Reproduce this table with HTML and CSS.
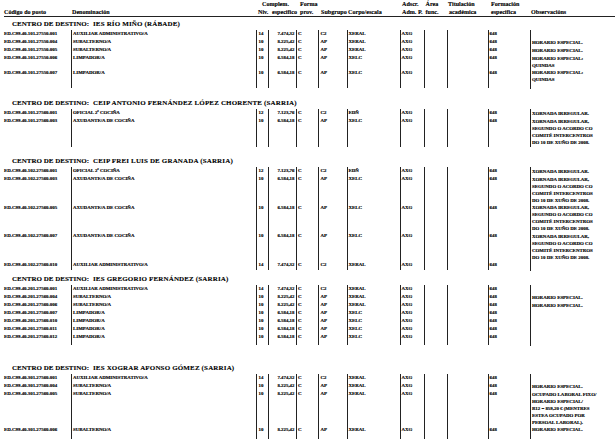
FILE: index.html
```html
<!DOCTYPE html>
<html lang="gl">
<head>
<meta charset="utf-8">
<title>RPT</title>
<link rel="stylesheet" href="styles.css">
</head>
<body>
<div class="page">
  <div class="head">
    <div class="hc"><div>&nbsp;</div><div>Código do posto</div></div>
    <div class="hc h-den"><div>&nbsp;</div><div>Denominación</div></div>
    <div class="hc h-niv"><div>&nbsp;</div><div>Niv.</div></div>
    <div class="hc h-comp"><div class="h-comp-top">Complem.</div><div>específico</div></div>
    <div class="hc h-forma"><div>Forma</div><div>prov.</div></div>
    <div class="hc h-sub"><div>&nbsp;</div><div>Subgrupo</div></div>
    <div class="hc h-corpo"><div>&nbsp;</div><div>Corpo/escala</div></div>
    <div class="hc h-ads"><div>Adscr.</div><div>Adm. P.</div></div>
    <div class="hc h-area"><div>Área</div><div>func.</div></div>
    <div class="hc h-tit"><div class="h-tit-top">Titulación</div><div>académica</div></div>
    <div class="hc h-form"><div>Formación</div><div>específica</div></div>
    <div class="hc h-obs"><div>&nbsp;</div><div>Observacións</div></div>
  </div>

  <section class="sec sec-1">
    <h2 class="title"><span class="lbl">CENTRO DE DESTINO:</span><span class="name">IES RÍO MIÑO (RÁBADE)</span></h2>
    <div class="grid">
      <div class="row"><span class="c code">ED.C99.40.101.27550.001</span><span class="c den">AUXILIAR ADMINISTRATIVO/A</span><span class="c niv">14</span><span class="c comp">7.474,32</span><span class="c forma">C</span><span class="c sub">C2</span><span class="c corpo">XERAL</span><span class="c ads">AXG</span><span class="c area"></span><span class="c tit"></span><span class="c form">648</span><span class="c obs"></span></div>
      <div class="row"><span class="c code">ED.C99.40.101.27550.004</span><span class="c den">SUBALTERNO/A</span><span class="c niv">10</span><span class="c comp">8.225,42</span><span class="c forma">C</span><span class="c sub">AP</span><span class="c corpo">XERAL</span><span class="c ads">AXG</span><span class="c area"></span><span class="c tit"></span><span class="c form">648</span><span class="c obs">HORARIO ESPECIAL.</span></div>
      <div class="row"><span class="c code">ED.C99.40.101.27550.005</span><span class="c den">SUBALTERNO/A</span><span class="c niv">10</span><span class="c comp">8.225,42</span><span class="c forma">C</span><span class="c sub">AP</span><span class="c corpo">XERAL</span><span class="c ads">AXG</span><span class="c area"></span><span class="c tit"></span><span class="c form">648</span><span class="c obs">HORARIO ESPECIAL.</span></div>
      <div class="row"><span class="c code">ED.C99.40.101.27550.006</span><span class="c den">LIMPADOR/A</span><span class="c niv">10</span><span class="c comp">6.584,18</span><span class="c forma">C</span><span class="c sub">AP</span><span class="c corpo">XELC</span><span class="c ads">AXG</span><span class="c area"></span><span class="c tit"></span><span class="c form">648</span><span class="c obs">HORARIO ESPECIAL:<br>QUINDAS</span></div>
      <div class="row"><span class="c code">ED.C99.40.101.27550.007</span><span class="c den">LIMPADOR/A</span><span class="c niv">10</span><span class="c comp">6.584,18</span><span class="c forma">C</span><span class="c sub">AP</span><span class="c corpo">XELC</span><span class="c ads">AXG</span><span class="c area"></span><span class="c tit"></span><span class="c form">648</span><span class="c obs">HORARIO ESPECIAL:<br>QUINDAS</span></div>
      <div class="row spacer sp-1"><span class="c code"></span><span class="c den"></span><span class="c niv"></span><span class="c comp"></span><span class="c forma"></span><span class="c sub"></span><span class="c corpo"></span><span class="c ads"></span><span class="c area"></span><span class="c tit"></span><span class="c form"></span><span class="c obs"></span></div>
    </div>
  </section>

  <section class="sec sec-2">
    <h2 class="title"><span class="lbl">CENTRO DE DESTINO:</span><span class="name">CEIP ANTONIO FERNÁNDEZ LÓPEZ CHORENTE (SARRIA)</span></h2>
    <div class="grid">
      <div class="row"><span class="c code">ED.C99.40.101.27560.001</span><span class="c den">OFICIAL 2ª COCIÑA</span><span class="c niv">12</span><span class="c comp">7.123,76</span><span class="c forma">C</span><span class="c sub">C2</span><span class="c corpo">EDÑ</span><span class="c ads">AXG</span><span class="c area"></span><span class="c tit"></span><span class="c form">648</span><span class="c obs">XORNADA IRREGULAR.</span></div>
      <div class="row"><span class="c code">ED.C99.40.101.27560.003</span><span class="c den">AXUDANTE/A DE COCIÑA</span><span class="c niv">10</span><span class="c comp">6.584,18</span><span class="c forma">C</span><span class="c sub">AP</span><span class="c corpo">XELC</span><span class="c ads">AXG</span><span class="c area"></span><span class="c tit"></span><span class="c form">648</span><span class="c obs">XORNADA IRREGULAR,<br>SEGUNDO O ACORDO CO<br>COMITÉ INTERCENTROS<br>DO 10 DE XUÑO DE 2008.</span></div>
      <div class="row spacer sp-2"><span class="c code"></span><span class="c den"></span><span class="c niv"></span><span class="c comp"></span><span class="c forma"></span><span class="c sub"></span><span class="c corpo"></span><span class="c ads"></span><span class="c area"></span><span class="c tit"></span><span class="c form"></span><span class="c obs"></span></div>
    </div>
  </section>

  <section class="sec sec-3">
    <h2 class="title"><span class="lbl">CENTRO DE DESTINO:</span><span class="name">CEIP FREI LUIS DE GRANADA (SARRIA)</span></h2>
    <div class="grid">
      <div class="row"><span class="c code">ED.C99.40.102.27560.001</span><span class="c den">OFICIAL 2ª COCIÑA</span><span class="c niv">12</span><span class="c comp">7.123,76</span><span class="c forma">C</span><span class="c sub">C2</span><span class="c corpo">EDÑ</span><span class="c ads">AXG</span><span class="c area"></span><span class="c tit"></span><span class="c form">648</span><span class="c obs">XORNADA IRREGULAR.</span></div>
      <div class="row"><span class="c code">ED.C99.40.102.27560.003</span><span class="c den">AXUDANTE/A DE COCIÑA</span><span class="c niv">10</span><span class="c comp">6.584,18</span><span class="c forma">C</span><span class="c sub">AP</span><span class="c corpo">XELC</span><span class="c ads">AXG</span><span class="c area"></span><span class="c tit"></span><span class="c form">648</span><span class="c obs">XORNADA IRREGULAR,<br>SEGUNDO O ACORDO CO<br>COMITÉ INTERCENTROS<br>DO 10 DE XUÑO DE 2008.</span></div>
      <div class="row"><span class="c code">ED.C99.40.102.27560.005</span><span class="c den">AXUDANTE/A DE COCIÑA</span><span class="c niv">10</span><span class="c comp">6.584,18</span><span class="c forma">C</span><span class="c sub">AP</span><span class="c corpo">XELC</span><span class="c ads">AXG</span><span class="c area"></span><span class="c tit"></span><span class="c form">648</span><span class="c obs">XORNADA IRREGULAR,<br>SEGUNDO O ACORDO CO<br>COMITÉ INTERCENTROS<br>DO 10 DE XUÑO DE 2008.</span></div>
      <div class="row"><span class="c code">ED.C99.40.102.27560.007</span><span class="c den">AXUDANTE/A DE COCIÑA</span><span class="c niv">10</span><span class="c comp">6.584,18</span><span class="c forma">C</span><span class="c sub">AP</span><span class="c corpo">XELC</span><span class="c ads">AXG</span><span class="c area"></span><span class="c tit"></span><span class="c form">648</span><span class="c obs">XORNADA IRREGULAR,<br>SEGUNDO O ACORDO CO<br>COMITÉ INTERCENTROS<br>DO 10 DE XUÑO DE 2008.</span></div>
      <div class="row"><span class="c code">ED.C99.40.102.27560.010</span><span class="c den">AUXILIAR ADMINISTRATIVO/A</span><span class="c niv">14</span><span class="c comp">7.474,32</span><span class="c forma">C</span><span class="c sub">C2</span><span class="c corpo">XERAL</span><span class="c ads">AXG</span><span class="c area"></span><span class="c tit"></span><span class="c form">648</span><span class="c obs"></span></div>
      <div class="row spacer sp-3"><span class="c code"></span><span class="c den"></span><span class="c niv"></span><span class="c comp"></span><span class="c forma"></span><span class="c sub"></span><span class="c corpo"></span><span class="c ads"></span><span class="c area"></span><span class="c tit"></span><span class="c form"></span><span class="c obs"></span></div>
    </div>
  </section>

  <section class="sec sec-4">
    <h2 class="title"><span class="lbl">CENTRO DE DESTINO:</span><span class="name">IES GREGORIO FERNÁNDEZ (SARRIA)</span></h2>
    <div class="grid">
      <div class="row"><span class="c code">ED.C99.40.201.27560.001</span><span class="c den">AUXILIAR ADMINISTRATIVO/A</span><span class="c niv">14</span><span class="c comp">7.474,32</span><span class="c forma">C</span><span class="c sub">C2</span><span class="c corpo">XERAL</span><span class="c ads">AXG</span><span class="c area"></span><span class="c tit"></span><span class="c form">648</span><span class="c obs"></span></div>
      <div class="row"><span class="c code">ED.C99.40.201.27560.004</span><span class="c den">SUBALTERNO/A</span><span class="c niv">10</span><span class="c comp">8.225,42</span><span class="c forma">C</span><span class="c sub">AP</span><span class="c corpo">XERAL</span><span class="c ads">AXG</span><span class="c area"></span><span class="c tit"></span><span class="c form">648</span><span class="c obs">HORARIO ESPECIAL.</span></div>
      <div class="row"><span class="c code">ED.C99.40.201.27560.006</span><span class="c den">SUBALTERNO/A</span><span class="c niv">10</span><span class="c comp">8.225,42</span><span class="c forma">C</span><span class="c sub">AP</span><span class="c corpo">XERAL</span><span class="c ads">AXG</span><span class="c area"></span><span class="c tit"></span><span class="c form">648</span><span class="c obs">HORARIO ESPECIAL.</span></div>
      <div class="row"><span class="c code">ED.C99.40.201.27560.007</span><span class="c den">LIMPADOR/A</span><span class="c niv">10</span><span class="c comp">6.584,18</span><span class="c forma">C</span><span class="c sub">AP</span><span class="c corpo">XELC</span><span class="c ads">AXG</span><span class="c area"></span><span class="c tit"></span><span class="c form">648</span><span class="c obs"></span></div>
      <div class="row"><span class="c code">ED.C99.40.201.27560.010</span><span class="c den">LIMPADOR/A</span><span class="c niv">10</span><span class="c comp">6.584,18</span><span class="c forma">C</span><span class="c sub">AP</span><span class="c corpo">XELC</span><span class="c ads">AXG</span><span class="c area"></span><span class="c tit"></span><span class="c form">648</span><span class="c obs"></span></div>
      <div class="row"><span class="c code">ED.C99.40.201.27560.011</span><span class="c den">LIMPADOR/A</span><span class="c niv">10</span><span class="c comp">6.584,18</span><span class="c forma">C</span><span class="c sub">AP</span><span class="c corpo">XELC</span><span class="c ads">AXG</span><span class="c area"></span><span class="c tit"></span><span class="c form">648</span><span class="c obs"></span></div>
      <div class="row"><span class="c code">ED.C99.40.201.27560.012</span><span class="c den">LIMPADOR/A</span><span class="c niv">10</span><span class="c comp">6.584,18</span><span class="c forma">C</span><span class="c sub">AP</span><span class="c corpo">XELC</span><span class="c ads">AXG</span><span class="c area"></span><span class="c tit"></span><span class="c form">648</span><span class="c obs"></span></div>
      <div class="row spacer sp-4"><span class="c code"></span><span class="c den"></span><span class="c niv"></span><span class="c comp"></span><span class="c forma"></span><span class="c sub"></span><span class="c corpo"></span><span class="c ads"></span><span class="c area"></span><span class="c tit"></span><span class="c form"></span><span class="c obs"></span></div>
    </div>
  </section>

  <section class="sec sec-5">
    <h2 class="title"><span class="lbl">CENTRO DE DESTINO:</span><span class="name">IES XOGRAR AFONSO GÓMEZ (SARRIA)</span></h2>
    <div class="grid">
      <div class="row"><span class="c code">ED.C99.40.301.27560.001</span><span class="c den">AUXILIAR ADMINISTRATIVO/A</span><span class="c niv">14</span><span class="c comp">7.474,32</span><span class="c forma">C</span><span class="c sub">C2</span><span class="c corpo">XERAL</span><span class="c ads">AXG</span><span class="c area"></span><span class="c tit"></span><span class="c form">648</span><span class="c obs"></span></div>
      <div class="row"><span class="c code">ED.C99.40.301.27560.004</span><span class="c den">SUBALTERNO/A</span><span class="c niv">10</span><span class="c comp">8.225,42</span><span class="c forma">C</span><span class="c sub">AP</span><span class="c corpo">XERAL</span><span class="c ads">AXG</span><span class="c area"></span><span class="c tit"></span><span class="c form">648</span><span class="c obs">HORARIO ESPECIAL.</span></div>
      <div class="row"><span class="c code">ED.C99.40.301.27560.005</span><span class="c den">SUBALTERNO/A</span><span class="c niv">10</span><span class="c comp">8.225,42</span><span class="c forma">C</span><span class="c sub">AP</span><span class="c corpo">XERAL</span><span class="c ads">AXG</span><span class="c area"></span><span class="c tit"></span><span class="c form">648</span><span class="c obs">OCUPADO LABORAL FIXO/<br>HORARIO ESPECIAL/<br>B12 = 859,20 € (MENTRES<br>ESTEA OCUPADO POR<br>PERSOAL LABORAL).</span></div>
      <div class="row"><span class="c code">ED.C99.40.301.27560.006</span><span class="c den">SUBALTERNO/A</span><span class="c niv">10</span><span class="c comp">8.225,42</span><span class="c forma">C</span><span class="c sub">AP</span><span class="c corpo">XERAL</span><span class="c ads">AXG</span><span class="c area"></span><span class="c tit"></span><span class="c form">648</span><span class="c obs">HORARIO ESPECIAL.</span></div>
      <div class="row spacer sp-5"><span class="c code"></span><span class="c den"></span><span class="c niv"></span><span class="c comp"></span><span class="c forma"></span><span class="c sub"></span><span class="c corpo"></span><span class="c ads"></span><span class="c area"></span><span class="c tit"></span><span class="c form"></span><span class="c obs"></span></div>
    </div>
  </section>
</div>
</body>
</html>
```
FILE: styles.css
```css
html, body {
  margin: 0;
  padding: 0;
  background: #ffffff;
}

body {
  font-family: "Liberation Serif", "Times New Roman", serif;
  font-weight: bold;
  color: #000000;
  width: 615px;
  overflow: hidden;
}

.page {
  padding-top: 1px;
  width: 615px;
}

/* ---------- header ---------- */
.head {
  display: grid;
  grid-template-columns: 67px 185px 12px 28px 22px 29px 53px 24px 23px 41px 42px 85px;
  margin-left: 4px;
  border-bottom: 1px solid #222222;
  font-size: 6.1px;
  line-height: 7.5px;
  white-space: nowrap;
  -webkit-text-stroke: 0.12px #000000;
}

.hc div {
  height: 7.5px;
}

.h-den { padding-left: 1px; }
.h-niv { padding-left: 2px; }
.h-comp { padding-left: 4px; }
.h-comp-top { margin-left: -10px; }
.h-forma { padding-left: 4px; }
.h-sub { padding-left: 3px; }
.h-corpo { padding-left: 1px; }
.h-ads { padding-left: 2px; }
.h-area { padding-left: 1.5px; }
.h-tit { padding-left: 2px; }
.h-tit-top { margin-left: -1px; }
.h-form { padding-left: 3px; }
.h-obs { padding-left: 1px; }

/* ---------- sections ---------- */
.sec-1 { margin-top: 2px; }
.sec-2 { margin-top: 10px; }
.sec-3 { margin-top: 10px; }
.sec-4 { margin-top: 4px; }
.sec-5 { margin-top: 18px; }

.title {
  margin: 0;
  padding-left: 12px;
  height: 10px;
  font-family: "Liberation Serif", "Times New Roman", serif;
  font-size: 7px;
  line-height: 10px;
  font-weight: bold;
  white-space: nowrap;
  display: flex;
  -webkit-text-stroke: 0.1px #000000;
}

.title .lbl {
  width: 81px;
}

.title .name {
  letter-spacing: 0.15px;
}

.grid {
  margin-top: 1px;
}

.row {
  display: grid;
  grid-template-columns: 71px 185px 12px 28px 22px 29px 53px 24px 23px 41px 42px 85px;
  font-size: 4.9px;
  line-height: 8px;
  white-space: nowrap;
  -webkit-text-stroke: 0.15px #000000;
}

.c {
  display: block;
  border-left: 1px solid #222222;
  padding-left: 1px;
  overflow: visible;
}

.c.code {
  border-left: none;
  padding-left: 4px;
}

.c.den { padding-left: 1px; }
.c.niv { padding-left: 1.5px; }
.c.comp {
  text-align: right;
  padding-left: 0;
  padding-right: 1.5px;
}
.c.forma { padding-left: 1px; }
.c.sub { padding-left: 1.5px; }
.c.corpo { padding-left: 0.5px; }
.c.ads { padding-left: 0.5px; }
.c.form { padding-left: 0.5px; }
.c.obs {
  padding-left: 1px;
  line-height: 7px;
  padding-top: 0.5px;
}

.spacer .c { height: 100%; }
.sp-1 { height: 5px; }
.sp-2 { height: 0.5px; }
.sp-3 { height: 1.5px; }
.sp-4 { height: 4px; }
.sp-5 { height: 12px; }
```
